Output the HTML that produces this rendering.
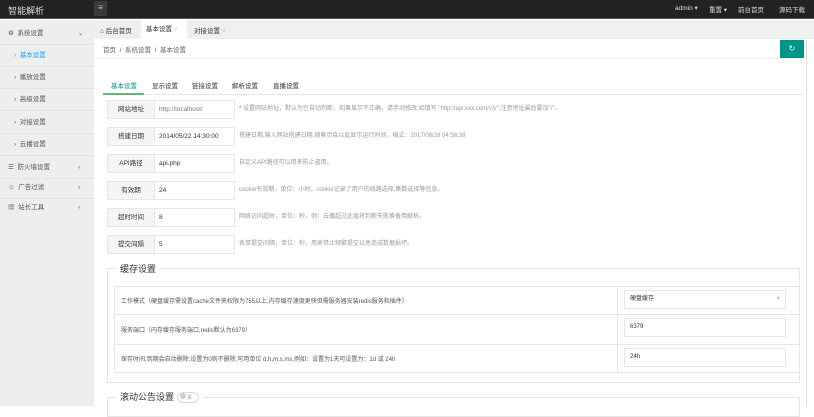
<!DOCTYPE html>
<html><head><meta charset="utf-8"><style>
*{margin:0;padding:0;box-sizing:border-box}
body{width:814px;height:406px;overflow:hidden;background:#fff;font-family:"Liberation Sans","Noto Sans CJK SC",sans-serif;font-size:6.5px;color:#333;position:relative}
.a{position:absolute}
.top{left:0;top:0;width:814px;height:19px;background:#222;border-bottom:1px solid #555}
.side{left:0;top:20px;width:94px;height:386px;background:#eeeeee}
.si{position:absolute;left:0;width:94px;height:22px;border-bottom:1px solid #e2e2e2;color:#555;font-size:6.5px;line-height:22px}
.tabbar{left:94px;top:20px;width:720px;height:19px;background:#eeeff1}
.lab{position:absolute;left:107px;width:48px;height:19px;background:#f5f5f5;border:1px solid #e6e6e6;text-align:center;line-height:17px;color:#333}
.inp{position:absolute;left:154px;width:81px;height:19px;border:1px solid #e6e6e6;line-height:17px;padding-left:4px;color:#333}
.tip{position:absolute;left:239px;line-height:19px;color:#999;font-size:6px}
.row{position:absolute;left:114px;width:686px;border-top:1px solid #e6e6e6;color:#555;font-size:6px;padding-left:7px}
.box{position:absolute;left:624px;width:162px;height:19px;border:1px solid #e6e6e6;padding-left:5px;line-height:17px;font-size:6px}
</style></head><body>
<div class="a top"></div>
<div class="a" style="left:8px;top:4px;color:#ddd;font-size:9px">智能解析</div>
<div class="a" style="left:94px;top:1px;width:13px;height:15px;background:#3a3a3a;color:#ccc;text-align:center;line-height:14px;font-size:8px">≡</div>
<div class="a" style="left:675px;top:4px;color:#ddd;font-size:6.5px">admin ▾</div>
<div class="a" style="left:709px;top:4px;color:#ddd;font-size:6.5px">重置 ▾</div>
<div class="a" style="left:738px;top:4px;color:#ddd;font-size:6.5px">前台首页</div>
<div class="a" style="left:779px;top:4px;color:#ddd;font-size:6.5px">源码下载</div>
<div class="a side"></div>
<div class="si" style="top:23px;padding-left:8px">⚙ &nbsp;系统设置<span style="position:absolute;left:78px">⌄</span></div>
<div class="si" style="top:45px;padding-left:14px;color:#1e9fff">› &nbsp;基本设置</div>
<div class="si" style="top:67px;padding-left:14px">› &nbsp;播放设置</div>
<div class="si" style="top:89px;padding-left:14px">› &nbsp;高级设置</div>
<div class="si" style="top:112px;padding-left:14px">› &nbsp;对接设置</div>
<div class="si" style="top:134px;padding-left:14px">› &nbsp;云播设置</div>
<div class="si" style="top:157px;padding-left:8px">☰ &nbsp;防火墙设置<span style="position:absolute;left:78px">‹</span></div>
<div class="si" style="top:177px;padding-left:8px">☺ &nbsp;广告过滤<span style="position:absolute;left:78px">‹</span></div>
<div class="si" style="top:197px;padding-left:8px;border:none">▦ &nbsp;站长工具<span style="position:absolute;left:78px">‹</span></div>
<div class="a tabbar"></div>
<div class="a" style="left:100px;top:25px;font-size:6.5px;color:#333">⌂ 后台首页</div>
<div class="a" style="left:141px;top:20px;width:46px;height:19px;background:#fff;line-height:19px;padding-left:5px;font-size:6.5px">基本设置 <span style="color:#bbb">×</span></div>
<div class="a" style="left:194px;top:25px;font-size:6.5px;color:#333">对接设置 <span style="color:#bbb">×</span></div>
<div class="a" style="left:103px;top:44px;color:#666;font-size:6.5px">首页 &nbsp;/ &nbsp;系统设置 &nbsp;/ &nbsp;基本设置</div>
<div class="a" style="left:94px;top:58px;width:712px;border-top:1px solid #eee"></div>
<div class="a" style="left:780px;top:40px;width:24px;height:18px;background:#009688;color:#fff;text-align:center;line-height:18px;font-size:8px">↻</div>
<div class="a" style="left:806px;top:40px;height:366px;border-left:1px solid #ddd"></div>
<div class="a" style="left:111px;top:80px;color:#009688;font-size:6.5px">基本设置</div>
<div class="a" style="left:152px;top:80px;font-size:6.5px">显示设置</div>
<div class="a" style="left:192px;top:80px;font-size:6.5px">链接设置</div>
<div class="a" style="left:232px;top:80px;font-size:6.5px">解析设置</div>
<div class="a" style="left:273px;top:80px;font-size:6.5px">直播设置</div>
<div class="a" style="left:103px;top:94px;width:701px;border-top:1px solid #e6e6e6"></div>
<div class="a" style="left:103px;top:93px;width:41px;border-top:2px solid #5fb878"></div>

<div class="lab" style="top:100px">网站地址</div><div class="inp" style="top:100px;color:#777">http://localhost/</div><div class="tip" style="top:100px"><span style="color:#f33">*</span> 设置网站地址，默认为空自动判断，如果显示不正确，请手动修改,如填写 "http://api.xxx.com/v3/",注意地址最后要加"/"。</div>
<div class="lab" style="top:127px">搭建日期</div><div class="inp" style="top:127px">2014/05/22 14:30:00</div><div class="tip" style="top:127px">搭建日期,输入网站搭建日期,搜索页会以此显示运行时间，格式：2017/08/28 04:56:38</div>
<div class="lab" style="top:154px">API路径</div><div class="inp" style="top:154px">api.php</div><div class="tip" style="top:154px">自定义API路径可以用来防止盗用。</div>
<div class="lab" style="top:181px">有效期</div><div class="inp" style="top:181px">24</div><div class="tip" style="top:181px">cookie有效期，单位：小时，cookie记录了用户的线路选择,集数选择等信息。</div>
<div class="lab" style="top:208px">超时时间</div><div class="inp" style="top:208px">8</div><div class="tip" style="top:208px">网络访问超时，单位：秒，例：云播超过此值将判断失败换备用解析。</div>
<div class="lab" style="top:235px">提交间隔</div><div class="inp" style="top:235px">5</div><div class="tip" style="top:235px">表单提交间隔，单位：秒，用来禁止频繁提交以免造成数据损坏。</div>

<div class="a" style="left:107px;top:268px;width:693px;height:115px;border:1px solid #e6e6e6"></div>
<div class="a" style="left:116px;top:262px;background:#fff;padding:0 4px;font-size:9px;color:#333">缓存设置</div>
<div class="a" style="left:114px;top:286px;width:686px;height:87px;border:1px solid #e6e6e6"></div>
<div class="a" style="left:617px;top:286px;height:87px;border-left:1px solid #e6e6e6"></div>
<div class="row" style="top:314px"></div><div class="row" style="top:344px"></div>
<div class="a" style="left:121px;top:296px;color:#555;font-size:6px">工作模式（硬盘缓存需设置cache文件夹权限为755以上,内存缓存速度更快但需服务器安装redis服务和插件）</div>
<div class="a" style="left:121px;top:325px;color:#555;font-size:6px">服务端口（内存缓存服务端口,redis默认为6379）</div>
<div class="a" style="left:121px;top:354px;color:#555;font-size:6px">保存时间,到期会自动删除,设置为0则不删除,可用单位 d,h,m,s,ms,例如：设置为1天可设置为：1d 或 24h</div>
<div class="box" style="top:290px">硬盘缓存<span style="position:absolute;right:5px;color:#bbb">▾</span></div>
<div class="box" style="top:318px">6379</div>
<div class="box" style="top:348px">24h</div>

<div class="a" style="left:107px;top:397px;width:693px;height:20px;border:1px solid #e6e6e6"></div>
<div class="a" style="left:116px;top:390px;background:#fff;padding:0 4px;font-size:9px;color:#333">滚动公告设置 <span style="display:inline-block;width:22px;height:11px;border:1px solid #ddd;border-radius:6px;font-size:5px;color:#999;vertical-align:middle;line-height:9px;padding-left:2px"><span style="display:inline-block;width:6px;height:6px;background:#ccc;border-radius:50%"></span> 关</span></div>
</body></html>
